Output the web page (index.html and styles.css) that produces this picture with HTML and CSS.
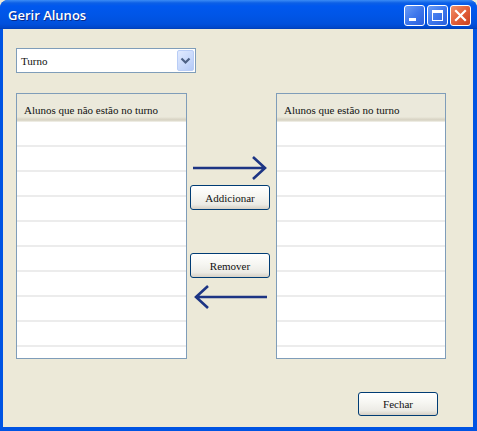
FILE: index.html
```html
<!DOCTYPE html>
<html lang="pt">
<head>
<meta charset="utf-8">
<title>Gerir Alunos</title>
<link rel="stylesheet" href="styles.css">
</head>
<body>
<div class="window">
  <div class="titlebar">
    <span class="title">Gerir Alunos</span>
    <div class="controls">
      <span class="cbtn min"><svg width="21" height="21" viewBox="0 0 21 21"><rect x="5" y="13" width="7" height="3" fill="#fff"/></svg></span>
      <span class="cbtn max"><svg width="21" height="21" viewBox="0 0 21 21"><rect x="5.5" y="5.5" width="10" height="10" fill="none" stroke="#fff" stroke-width="1"/><rect x="5" y="5" width="11" height="3" fill="#fff"/></svg></span>
      <span class="cbtn close"><svg width="21" height="21" viewBox="0 0 21 21"><path d="M6 6 L15 15 M15 6 L6 15" stroke="#fff" stroke-width="2.2" stroke-linecap="square"/></svg></span>
    </div>
  </div>
  <div class="body">
    <div class="combo">
      <span class="combo-text">Turno</span>
      <span class="combo-btn"><svg width="17" height="21" viewBox="0 0 17 21"><path d="M4.5 8.5 L8.5 12.5 L12.5 8.5" fill="none" stroke="#4d6185" stroke-width="2.2"/></svg></span>
    </div>
    <div class="main">
      <div class="list left">
        <div class="list-head">Alunos que não estão no turno</div>
        <div class="rows">
          <div class="row"></div><div class="row"></div><div class="row"></div><div class="row"></div><div class="row"></div>
          <div class="row"></div><div class="row"></div><div class="row"></div><div class="row"></div><div class="row"></div>
        </div>
      </div>
      <div class="middle">
        <svg class="arrow arrow-right" width="76" height="24" viewBox="0 0 76 24"><path d="M1 12 H73 M61 1 L73 12 L61 23" fill="none" stroke="#1d3584" stroke-width="2.6"/></svg>
        <button class="btn add">Addicionar</button>
        <button class="btn rem">Remover</button>
        <svg class="arrow arrow-left" width="76" height="24" viewBox="0 0 76 24"><path d="M75 12 H4 M16 1 L4 12 L16 23" fill="none" stroke="#1d3584" stroke-width="2.6"/></svg>
      </div>
      <div class="list right">
        <div class="list-head">Alunos que estão no turno</div>
        <div class="rows">
          <div class="row"></div><div class="row"></div><div class="row"></div><div class="row"></div><div class="row"></div>
          <div class="row"></div><div class="row"></div><div class="row"></div><div class="row"></div><div class="row"></div>
        </div>
      </div>
    </div>
    <div class="footer">
      <button class="btn">Fechar</button>
    </div>
  </div>
</div>
</body>
</html>
```
FILE: styles.css
```css
* { box-sizing: border-box; }
html, body { margin: 0; padding: 0; background: #ece9d8; }
body { width: 477px; height: 431px; overflow: hidden; }

.window {
  width: 477px;
  height: 431px;
  display: flex;
  flex-direction: column;
  background: #0054e3;
  border-radius: 8px 8px 0 0;
  overflow: hidden;
}

.titlebar {
  height: 29px;
  flex: none;
  display: flex;
  align-items: center;
  justify-content: space-between;
  padding: 0 6px 0 8px;
  background: linear-gradient(to bottom, #3b8cf5 0px, #0c5fe6 3px, #0058ee 6px, #0055e6 16px, #0050dc 24px, #0046c8 28px, #003bb0 29px);
}
.title {
  color: #fff;
  font-family: "Open Sans", "DejaVu Sans", sans-serif;
  font-weight: 600;
  font-size: 13px;
  text-shadow: 1px 1px 0 #0a2a8a;
  padding-top: 1px;
}
.controls { display: flex; gap: 2px; padding-top: 2px; }
.cbtn {
  width: 21px;
  height: 21px;
  border: 1px solid #fff;
  border-radius: 3px;
  display: flex;
  align-items: center;
  justify-content: center;
  background: linear-gradient(135deg, #6a9cf5 0%, #3e77ec 50%, #2b5fdc 100%);
}
.cbtn svg { display: block; margin: -1px; }
.cbtn.close { background: linear-gradient(135deg, #f0906a 0%, #e3603a 50%, #c9401f 100%); }

.body {
  flex: 1;
  margin: 0 4px 4px 3px;
  background: #ece9d8;
  padding: 19px 27px 0 13px;
  display: flex;
  flex-direction: column;
  font-family: "Liberation Serif", serif;
  font-size: 11px;
  color: #111;
}

.combo {
  width: 180px;
  height: 25px;
  border: 1px solid #7f9db9;
  background: #fff;
  display: flex;
  align-items: center;
  justify-content: space-between;
  padding: 0 1px 0 4px;
}
.combo-btn {
  width: 17px;
  height: 21px;
  border: 1px solid #b9cdf6;
  border-radius: 2px;
  background: linear-gradient(135deg, #e1eafe 0%, #c7d8fb 60%, #b4c9f7 100%);
  display: flex;
}
.combo-btn svg { display: block; margin: -1px; }

.main {
  margin-top: 20px;
  display: flex;
  height: 266px;
}
.list {
  border: 1px solid #7f9db9;
  background: #fff;
  display: flex;
  flex-direction: column;
  overflow: hidden;
}
.list.left { width: 171px; }
.list.right { width: 170px; }
.list-head {
  height: 28px;
  flex: none;
  display: flex;
  align-items: center;
  padding: 3px 0 0 7px;
  background: linear-gradient(to bottom, #ebe9db 0, #ebe9db 23px, #e2dfd0 24px, #d6d2c2 26px, #e4e1d4 27px, #f6f6f1 28px);
}
.rows { display: flex; flex-direction: column; }
.row {
  height: 25px;
  flex: none;
  border-bottom: 2px solid #ececec;
}

.middle {
  width: 89px;
  display: flex;
  flex-direction: column;
  align-items: flex-start;
}
.arrow { display: block; }
.arrow-right { margin: 63px 0 0 5px; }
.arrow-left { margin: 7px 0 0 5px; }

.btn {
  width: 80px;
  height: 25px;
  border: 1px solid #003c74;
  border-radius: 3px;
  background: linear-gradient(to bottom, #ffffff 0%, #f7f7f3 40%, #ecebe5 80%, #d6d0c5 100%);
  font-family: "Liberation Serif", serif;
  font-size: 11px;
  color: #111;
  padding: 0;
}
.btn.add { margin: 5px 0 0 3px; }
.btn.rem { margin: 43px 0 0 3px; }

.footer {
  margin-top: 33px;
  display: flex;
  justify-content: flex-end;
  padding-right: 8px;
}
.footer .btn { height: 24px; }
```
